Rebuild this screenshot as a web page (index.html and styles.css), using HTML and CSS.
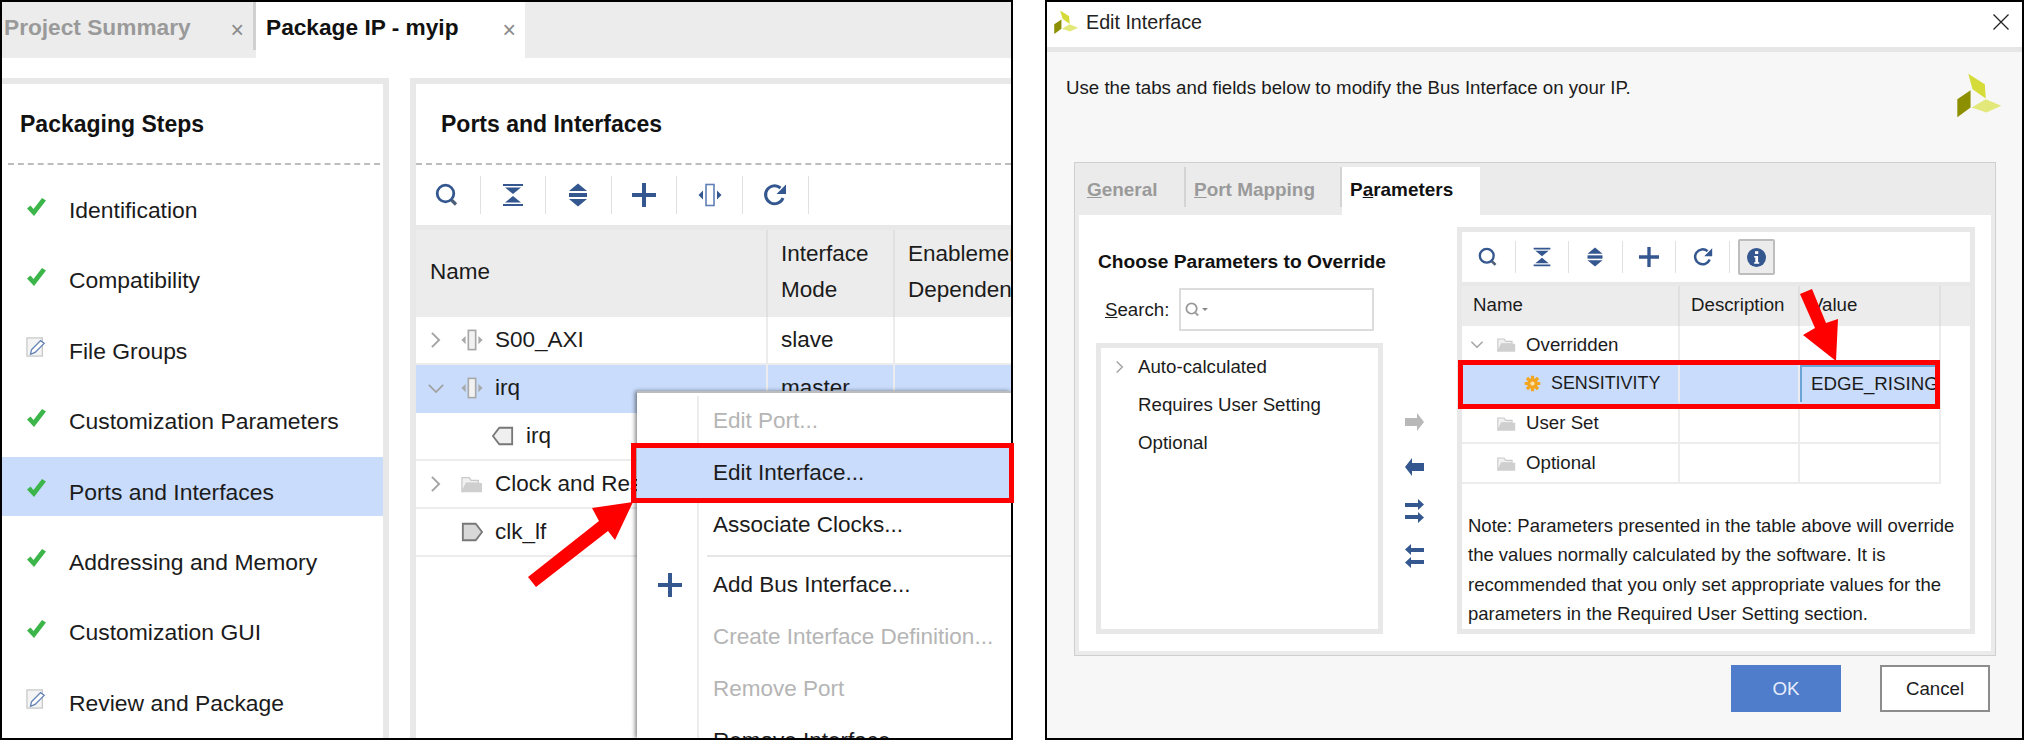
FILE: index.html
```html
<!DOCTYPE html>
<html lang="en">
<head>
    <meta charset="UTF-8">
    <title>Package IP and Edit Interface</title>
    <link rel="stylesheet" href="styles.css">
</head>
<body>

<!-- icon sprite -->
<svg class="sprite" width="0" height="0">
    <symbol id="i-check" viewBox="0 0 20 20"><path d="M1 11.5 L4.5 8.5 L7.5 12 L16 1 L20 3.5 L8 19 Z" fill="#3cb54a"/></symbol>
    <symbol id="i-doc" viewBox="0 0 22 22">
        <rect x="1" y="1" width="17" height="20" fill="#f4f4f4" stroke="#c9c9c9" stroke-width="1.4"/>
        <path d="M5 19 L6 14 L16 4 L20 7 L10 17 Z" fill="#fff" stroke="#5f7fb5" stroke-width="1.4"/>
    </symbol>
    <symbol id="i-search" viewBox="0 0 24 24">
        <circle cx="10.5" cy="10.5" r="8.3" fill="none" stroke="#34578f" stroke-width="2.8"/>
        <path d="M16.5 17 L21 21.5" stroke="#4b5f78" stroke-width="3.2"/>
    </symbol>
    <symbol id="i-collapse" viewBox="0 0 24 24">
        <path d="M2 1 H22 V3 H2 Z M4 4.5 H20 L12 11 Z M4 19.5 H20 L12 13 Z M2 21 H22 V23 H2 Z" fill="#34578f"/>
    </symbol>
    <symbol id="i-expand" viewBox="0 0 24 24">
        <path d="M12 0.5 L21 8 H3 Z M12 23.5 L21 16 H3 Z" fill="#34578f"/>
        <rect x="3" y="10" width="18" height="4" fill="#34578f"/>
    </symbol>
    <symbol id="i-plus" viewBox="0 0 24 24"><path d="M10 0 H14 V10 H24 V14 H14 V24 H10 V14 H0 V10 H10 Z" fill="#34578f"/></symbol>
    <symbol id="i-column" viewBox="0 0 24 24">
        <rect x="8" y="1.5" width="8" height="21" fill="#fff" stroke="#5f7fb5" stroke-width="1.6"/>
        <path d="M0.5 12 L5 7.5 V16.5 Z M23.5 12 L19 7.5 V16.5 Z" fill="#34578f"/>
    </symbol>
    <symbol id="i-refresh" viewBox="0 0 24 24">
        <path d="M20 15 A9 9 0 1 1 17.5 5" fill="none" stroke="#34578f" stroke-width="3"/>
        <path d="M23 1.5 V11 H13.5 Z" fill="#34578f"/>
    </symbol>
    <symbol id="i-iface" viewBox="0 0 24 24">
        <rect x="8" y="1.5" width="8" height="21" fill="#f2f2f2" stroke="#a8a8a8" stroke-width="1.8"/>
        <path d="M0.5 12 L5 7.5 V16.5 Z M23.5 12 L19 7.5 V16.5 Z" fill="#a8a8a8"/>
    </symbol>
    <symbol id="i-folder" viewBox="0 0 24 24">
        <path d="M1 5 H9 L11 8 H19 V11 H6 L1 21 Z" fill="#f1f1f1" stroke="#c9c9c9" stroke-width="1.4"/>
        <path d="M5 11 H23 V21 H1 Z" fill="#cfcfcf"/>
    </symbol>
    <symbol id="i-port-in" viewBox="0 0 24 24"><path d="M1 12 L8 3 H22 V21 H8 Z" fill="#efefef" stroke="#777" stroke-width="2"/></symbol>
    <symbol id="i-port-out" viewBox="0 0 24 24"><path d="M23 12 L16 3 H2 V21 H16 Z" fill="#d8d8d8" stroke="#777" stroke-width="2"/></symbol>
    <symbol id="i-gear" viewBox="0 0 24 24">
        <g stroke="#f3a51f" stroke-width="4.5"><path d="M12 1 V23 M1 12 H23 M4.2 4.2 L19.8 19.8 M19.8 4.2 L4.2 19.8"/></g>
        <circle cx="12" cy="12" r="7.5" fill="#f3a51f"/>
        <circle cx="12" cy="12" r="3" fill="#fbe3ae"/>
    </symbol>
    <symbol id="i-chev-r" viewBox="0 0 12 20"><path d="M2 2 L10 10 L2 18" fill="none" stroke="#a2a2a2" stroke-width="2"/></symbol>
    <symbol id="i-chev-d" viewBox="0 0 20 12"><path d="M2 2 L10 10 L18 2" fill="none" stroke="#a2a2a2" stroke-width="2"/></symbol>
    <symbol id="i-right" viewBox="0 0 26 26"><path d="M6 9 H18 V4 L25 13 L18 22 V17 H6 Z" fill="currentColor"/></symbol>
    <symbol id="i-left" viewBox="0 0 26 26"><path d="M25 9 H13 V4 L6 13 L13 22 V17 H25 Z" fill="currentColor"/></symbol>
    <symbol id="i-both-r" viewBox="0 0 26 26"><path d="M6 5 H19 V1 L25 6.5 L19 12 V9 H6 Z M6 17 H19 V14 L25 19.5 L19 25 V21 H6 Z" fill="#34578f"/></symbol>
    <symbol id="i-both-l" viewBox="0 0 26 26"><path d="M25 5 H12 V1 L6 6.5 L12 12 V9 H25 Z M25 17 H12 V14 L6 19.5 L12 25 V21 H25 Z" fill="#34578f"/></symbol>
    <symbol id="i-logo" viewBox="1295 210 145 145">
        <path d="M1335 218 L1385 250 L1388 293 L1348 265 Z" fill="#d5dc3a"/>
        <path d="M1345 320 L1388 295 L1435 315 L1390 335 Z" fill="#e3e87a"/>
        <path d="M1302 295 L1342 268 V320 L1302 350 Z" fill="#8b8f00"/>
    </symbol>
</svg>

<!-- left screenshot: Package IP -->
<div class="shot shot-left">
    <div class="doc-tabs">
        <div class="doc-tab">Project Summary <span class="x">×</span></div>
        <div class="doc-tab active">Package IP - myip <span class="x">×</span></div>
    </div>

    <div class="panels">
        <div class="steps">
            <h3 class="panel-title">Packaging Steps</h3>
            <ul class="step-list">
                <li><svg class="step-ico"><use href="#i-check"/></svg>Identification</li>
                <li><svg class="step-ico"><use href="#i-check"/></svg>Compatibility</li>
                <li><svg class="step-ico"><use href="#i-doc"/></svg>File Groups</li>
                <li><svg class="step-ico"><use href="#i-check"/></svg>Customization Parameters</li>
                <li class="selected"><svg class="step-ico"><use href="#i-check"/></svg>Ports and Interfaces</li>
                <li><svg class="step-ico"><use href="#i-check"/></svg>Addressing and Memory</li>
                <li><svg class="step-ico"><use href="#i-check"/></svg>Customization GUI</li>
                <li><svg class="step-ico"><use href="#i-doc"/></svg>Review and Package</li>
            </ul>
        </div>

        <div class="ports">
            <h3 class="panel-title">Ports and Interfaces</h3>
            <div class="toolbar big">
                <span class="tool"><svg><use href="#i-search"/></svg></span>
                <span class="tool"><svg><use href="#i-collapse"/></svg></span>
                <span class="tool"><svg><use href="#i-expand"/></svg></span>
                <span class="tool"><svg><use href="#i-plus"/></svg></span>
                <span class="tool"><svg><use href="#i-column"/></svg></span>
                <span class="tool"><svg><use href="#i-refresh"/></svg></span>
            </div>
            <table class="grid ports-grid">
                <thead>
                    <tr>
                        <th>Name</th>
                        <th>Interface<br>Mode</th>
                        <th>Enablement<br>Dependency</th>
                    </tr>
                </thead>
                <tbody>
                    <tr>
                        <td><div class="node"><span class="caret"><svg class="chev-r"><use href="#i-chev-r"/></svg></span><svg class="node-ico"><use href="#i-iface"/></svg>S00_AXI</div></td>
                        <td>slave</td><td></td>
                    </tr>
                    <tr class="selected">
                        <td><div class="node"><span class="caret"><svg class="chev-d"><use href="#i-chev-d"/></svg></span><svg class="node-ico"><use href="#i-iface"/></svg>irq</div></td>
                        <td>master</td><td></td>
                    </tr>
                    <tr>
                        <td><div class="node child"><svg class="node-ico"><use href="#i-port-in"/></svg>irq</div></td>
                        <td></td><td></td>
                    </tr>
                    <tr>
                        <td><div class="node"><span class="caret"><svg class="chev-r"><use href="#i-chev-r"/></svg></span><svg class="node-ico"><use href="#i-folder"/></svg>Clock and Reset</div></td>
                        <td></td><td></td>
                    </tr>
                    <tr>
                        <td><div class="node"><span class="caret"></span><svg class="node-ico"><use href="#i-port-out"/></svg>clk_lf</div></td>
                        <td></td><td></td>
                    </tr>
                </tbody>
            </table>
        </div>
    </div>

    <!-- context menu -->
    <div class="menu">
        <div class="menu-item off"><span class="gutter"></span>Edit Port...</div>
        <div class="menu-item hover"><span class="gutter"></span>Edit Interface...</div>
        <div class="menu-item"><span class="gutter"></span>Associate Clocks...</div>
        <div class="menu-sep"></div>
        <div class="menu-item"><span class="gutter"><svg class="menu-plus"><use href="#i-plus"/></svg></span>Add Bus Interface...</div>
        <div class="menu-item off"><span class="gutter"></span>Create Interface Definition...</div>
        <div class="menu-item off"><span class="gutter"></span>Remove Port</div>
        <div class="menu-item"><span class="gutter"></span>Remove Interface</div>
    </div>

    <!-- annotations -->
    <div class="mark mark-edit"></div>
    <svg class="arrow arrow-edit" width="110" height="90" viewBox="526 500 110 90">
        <path d="M528 577 L536 587 L608 531 L615 540 L633 502 L592 508 L599 521 Z" fill="#ff0000"/>
    </svg>
</div>

<!-- right screenshot: Edit Interface dialog -->
<div class="shot shot-right">
    <div class="titlebar">
        <svg class="title-logo"><use href="#i-logo"/></svg>
        <span class="title-text">Edit Interface</span>
        <svg class="title-close" viewBox="0 0 16 16"><path d="M0.5 0.5 L15.5 15.5 M15.5 0.5 L0.5 15.5" stroke="#222" stroke-width="1.3"/></svg>
    </div>

    <div class="dialog">
        <div class="intro">
            <span>Use the tabs and fields below to modify the Bus Interface on your IP.</span>
            <svg class="intro-logo"><use href="#i-logo"/></svg>
        </div>

        <div class="pane">
            <div class="pane-tabs">
                <div class="pane-tab first"><u>G</u>eneral</div>
                <div class="pane-tab second"><u>P</u>ort Mapping</div>
                <div class="pane-tab active">P<u>a</u>rameters</div>
            </div>
            <div class="pane-body">
                <div class="chooser">
                    <h4 class="chooser-title">Choose Parameters to Override</h4>
                    <div class="search-row">
                        <label class="search-label"><u>S</u>earch:</label>
                        <div class="search-box">
                            <svg class="search-ico"><use href="#i-search"/></svg>
                            <span class="search-drop"></span>
                        </div>
                    </div>
                    <div class="cat-list">
                        <div class="cat"><span class="cat-caret"><svg class="chev-r small"><use href="#i-chev-r"/></svg></span>Auto-calculated</div>
                        <div class="cat"><span class="cat-caret"></span>Requires User Setting</div>
                        <div class="cat"><span class="cat-caret"></span>Optional</div>
                    </div>
                </div>

                <div class="movers">
                    <svg class="mover off"><use href="#i-right"/></svg>
                    <svg class="mover"><use href="#i-left"/></svg>
                    <svg class="mover"><use href="#i-both-r"/></svg>
                    <svg class="mover"><use href="#i-both-l"/></svg>
                </div>

                <div class="params">
                    <div class="toolbar small">
                        <span class="tool"><svg><use href="#i-search"/></svg></span>
                        <span class="tool"><svg><use href="#i-collapse"/></svg></span>
                        <span class="tool"><svg><use href="#i-expand"/></svg></span>
                        <span class="tool"><svg><use href="#i-plus"/></svg></span>
                        <span class="tool"><svg><use href="#i-refresh"/></svg></span>
                        <span class="info-btn">
                            <svg viewBox="0 0 24 24">
                                <circle cx="12" cy="12" r="12" fill="#34578f"/>
                                <rect x="10.2" y="4" width="4" height="3.6" fill="#fff"/>
                                <path d="M9 10 H14 V18 H15.5 V20 H9 V18 H10.5 V12 H9 Z" fill="#fff"/>
                            </svg>
                        </span>
                    </div>
                    <table class="grid params-grid">
                        <thead>
                            <tr><th>Name</th><th>Description</th><th>Value</th><th class="tail"></th></tr>
                        </thead>
                        <tbody>
                            <tr class="tight">
                                <td><div class="pnode"><svg class="chev-d small"><use href="#i-chev-d"/></svg><svg class="pnode-ico"><use href="#i-folder"/></svg>Overridden</div></td>
                                <td></td><td></td><td class="tail"></td>
                            </tr>
                            <tr class="tight selected">
                                <td><div class="pnode leaf"><svg class="gear"><use href="#i-gear"/></svg><span class="param-name">SENSITIVITY</span></div></td>
                                <td></td><td class="editing"><div class="edit-val">EDGE_RISING</div></td><td class="tail"></td>
                            </tr>
                            <tr>
                                <td><div class="pnode"><span class="pnode-gap"></span><svg class="pnode-ico"><use href="#i-folder"/></svg>User Set</div></td>
                                <td></td><td></td><td class="tail"></td>
                            </tr>
                            <tr>
                                <td><div class="pnode"><span class="pnode-gap"></span><svg class="pnode-ico"><use href="#i-folder"/></svg>Optional</div></td>
                                <td></td><td></td><td class="tail"></td>
                            </tr>
                        </tbody>
                    </table>
                    <p class="note">Note: Parameters presented in the table above will override the values normally calculated by the software. It is recommended that you only set appropriate values for the parameters in the Required User Setting section.</p>
                </div>
            </div>
        </div>

        <div class="actions">
            <button class="btn primary">OK</button>
            <button class="btn">Cancel</button>
        </div>
    </div>

    <!-- annotations -->
    <div class="mark mark-param"></div>
    <svg class="arrow arrow-param" width="44" height="76" viewBox="1797 287 44 76">
        <path d="M1800 294 L1812 289 L1826 323 L1838 319 L1836 361 L1803 335 L1815 328 Z" fill="#ff0000"/>
    </svg>
</div>

</body>
</html>
```

FILE: styles.css
```css
* {
    box-sizing: border-box;
}

body {
    margin: 0;
    width: 2024px;
    height: 740px;
    display: flex;
    gap: 32px;
    background: #fff;
    color: #1b1b1b;
    font-family: "Liberation Sans", Arial, sans-serif;
    overflow: hidden;
}

.sprite {
    position: absolute;
}

.shot {
    position: relative;
    height: 740px;
    border: 2px solid #000;
    display: flex;
    flex-direction: column;
}

.shot-left {
    width: 1013px;
    font-size: 22.9px;
}

.shot-right {
    flex: 1;
    font-size: 18.7px;
}

/* Red annotations */
.mark {
    position: absolute;
    border: 5px solid #f00;
}

.mark-edit {
    left: 629px;
    top: 441px;
    width: 383px;
    height: 60px;
}

.mark-param {
    left: 411px;
    top: 358px;
    width: 482px;
    height: 49px;
}

.arrow {
    position: absolute;
}

.arrow-edit {
    left: 524px;
    top: 498px;
}

.arrow-param {
    left: 750px;
    top: 285px;
}

/* Document tabs */
.doc-tabs {
    display: flex;
    align-items: flex-start;
    height: 56px;
    flex: none;
    background: #ececec;
    font-size: 22.7px;
    font-weight: bold;
}

.doc-tab {
    position: relative;
    width: 254px;
    height: 48px;
    padding: 2px 0 0 2px;
    line-height: 46px;
    color: #9a9a9a;
    border-right: 3px solid #d0d0d0;
}

.doc-tab.active {
    width: 269px;
    height: 56px;
    padding-left: 10px;
    background: #fff;
    color: #111;
    border-right: none;
}

.x {
    position: absolute;
    right: 9px;
    top: 4px;
    line-height: 48px;
    font-size: 23px;
    font-weight: normal;
    color: #8a8a8a;
}

/* Panels */
.panels {
    flex: 1;
    min-height: 0;
    display: flex;
    margin-top: 20px;
    gap: 21px;
}

.steps {
    width: 387px;
    border-top: 6px solid #e8e8e8;
    border-right: 6px solid #e8e8e8;
}

.ports {
    flex: 1;
    min-width: 0;
    border-top: 6px solid #e8e8e8;
    border-left: 6px solid #e8e8e8;
    overflow: hidden;
}

.panel-title {
    margin: 0 3px 0 6px;
    height: 81px;
    padding: 28px 0 0 12px;
    font-size: 23px;
    line-height: 24px;
    color: #111;
    border-bottom: 2px dashed #bdbdbd;
}

.ports .panel-title {
    margin: 0;
    padding-left: 25px;
}

.step-list {
    list-style: none;
    margin: 0;
    padding: 10px 0 0;
}

.step-list li {
    display: flex;
    align-items: center;
    height: 59px;
    margin-bottom: 11.4px;
    padding: 12px 0 0 24px;
}

.step-list li.selected {
    background: #c9dcfb;
}

.step-ico {
    width: 20px;
    height: 20px;
    margin: -8px 23px 0 0;
    flex: none;
}

/* Toolbars */
.toolbar {
    display: flex;
    align-items: center;
    background: #fff;
}

.toolbar.big {
    height: 60px;
    margin-left: -1px;
}

.toolbar.small {
    height: 50px;
}

.tool {
    display: flex;
    align-items: center;
    justify-content: center;
    border-right: 1.5px solid #e0e0e0;
}

.big .tool {
    width: 65.6px;
    height: 38px;
}

.big .tool svg {
    width: 24px;
    height: 24px;
}

.small .tool {
    width: 53.6px;
    height: 32px;
}

.small .tool svg {
    width: 20px;
    height: 20px;
}

.info-btn {
    display: flex;
    align-items: center;
    justify-content: center;
    width: 37px;
    height: 36px;
    margin-left: 8px;
    background: #ececec;
    border: 2px solid #bdbdbd;
    border-radius: 2px;
}

.info-btn svg {
    width: 19px;
    height: 19px;
}

/* Tables */
.grid {
    border-collapse: separate;
    border-spacing: 0;
    table-layout: fixed;
    border-top-style: solid;
    border-top-color: #e8e8e8;
}

.grid th {
    background: #ececec;
    font-weight: normal;
    text-align: left;
    border-right: 2px solid #e0e0e0;
}

.grid td {
    border-right: 2px solid #ececec;
    border-bottom: 2px solid #ececec;
    padding: 0;
}

.grid tr.selected td {
    background: #c9dcfb;
    border-bottom-color: #c9dcfb;
}

.ports-grid {
    width: 700px;
    border-top-width: 5px;
    font-size: 22.5px;
}

.ports-grid th {
    height: 87px;
    padding: 0 0 4px 13px;
    line-height: 36px;
}

.ports-grid th:first-child {
    width: 352px;
    padding-left: 14px;
}

.ports-grid th:nth-child(2) {
    width: 127px;
}

.ports-grid td {
    height: 48px;
}

.ports-grid td + td {
    padding-left: 13px;
}

.node {
    display: flex;
    align-items: center;
    padding-left: 14px;
}

.node.child {
    padding-left: 72px;
}

.caret {
    width: 27px;
    display: flex;
    flex: none;
}

.chev-r {
    width: 11px;
    height: 18px;
}

.chev-d {
    width: 18px;
    height: 11px;
    margin-left: -3px;
}

.node-ico {
    width: 22px;
    height: 22px;
    margin: 0 12px 0 4px;
    flex: none;
}

/* Context menu */
.menu {
    position: absolute;
    left: 635px;
    top: 389px;
    right: 0;
    bottom: 0;
    padding-top: 2px;
    font-size: 22.5px;
    background: #fff;
    border-top: 2px solid #bcbcbc;
    box-shadow: -2px 0 4px rgba(0, 0, 0, 0.45);
    overflow: hidden;
}

.menu::before {
    content: "";
    position: absolute;
    left: 60px;
    top: 3px;
    bottom: 0;
    width: 2px;
    background: #ececec;
}

.menu-item {
    position: relative;
    display: flex;
    align-items: center;
    height: 52px;
}

.menu-item.off {
    color: #b5b5b5;
}

.menu-item.hover {
    background: #c9dcfb;
}

.gutter {
    width: 76px;
    flex: none;
    display: flex;
    padding-left: 21px;
}

.menu-plus {
    width: 24px;
    height: 24px;
}

.menu-sep {
    height: 8px;
    padding-top: 4px;
    margin-left: 70px;
}

.menu-sep::after {
    content: "";
    display: block;
    height: 2px;
    background: #e6e6e6;
}

/* Dialog */
.titlebar {
    position: relative;
    height: 50px;
    flex: none;
    display: flex;
    align-items: center;
    padding: 0 12px 5px 6px;
    background: #fff;
    border-bottom: 5px solid #e6e6e6;
}

.title-logo {
    width: 26px;
    height: 26px;
    margin-right: 7px;
}

.title-text {
    flex: 1;
    font-size: 19.7px;
    color: #222;
}

.title-close {
    width: 16px;
    height: 16px;
    margin-right: 1px;
}

.dialog {
    flex: 1;
    min-height: 0;
    display: flex;
    flex-direction: column;
    background: #f7f7f7;
}

.intro {
    height: 110px;
    flex: none;
    display: flex;
    justify-content: space-between;
    padding: 25px 19px 0;
    line-height: 22px;
}

.intro-logo {
    width: 48px;
    height: 48px;
    margin-top: -6px;
}

.pane {
    height: 494px;
    flex: none;
    margin: 0 26px 0 27px;
    padding: 4px;
    background: #ebebeb;
    border: 1px solid #cfcfcf;
    display: flex;
    flex-direction: column;
}

.pane-tabs {
    height: 48px;
    flex: none;
    display: flex;
    font-size: 18.95px;
    font-weight: bold;
    color: #9a9a9a;
}

.pane-tab {
    height: 40px;
    line-height: 46px;
    padding-left: 8px;
    border-right: 2px solid #d4d4d4;
}

.pane-tab.first {
    width: 107px;
}

.pane-tab.second {
    width: 156px;
}

.pane-tab.active {
    width: 138px;
    height: 48px;
    background: #fff;
    color: #111;
    border-right: none;
}

.pane-body {
    flex: 1;
    min-height: 0;
    display: flex;
    padding: 12px 16px 17px 17px;
    background: #fff;
}

.chooser {
    width: 287px;
    flex: none;
    display: flex;
    flex-direction: column;
}

.chooser-title {
    margin: 24px 0 15px 2px;
    font-size: 19.2px;
    line-height: 22px;
    white-space: nowrap;
    color: #111;
}

.search-row {
    display: flex;
    align-items: center;
    height: 43px;
    margin: 0 9px 12px 9px;
}

.search-label {
    width: 74px;
    flex: none;
}

.search-box {
    width: 195px;
    height: 43px;
    display: flex;
    align-items: center;
    padding-left: 4px;
    background: #fff;
    border: 2px solid #dcdcdc;
}

.search-ico {
    width: 15px;
    height: 15px;
    filter: grayscale(1) opacity(0.6);
}

.search-drop {
    margin-left: 2px;
    border: 3px solid transparent;
    border-top: 3px solid #888;
    border-bottom: none;
}

.cat-list {
    flex: 1;
    border: 5px solid #e8e8e8;
}

.cat {
    display: flex;
    align-items: center;
    height: 38px;
    padding-left: 14px;
}

.cat-caret {
    width: 23px;
    display: flex;
    flex: none;
}

.chev-r.small {
    width: 9px;
    height: 14px;
}

.chev-d.small {
    width: 14px;
    height: 9px;
    margin-left: 0;
}

.movers {
    width: 74px;
    flex: none;
    display: flex;
    flex-direction: column;
    gap: 18.6px;
    padding: 182px 0 0 16px;
    color: #34578f;
}

.mover {
    width: 26px;
    height: 26px;
}

.mover.off {
    color: #b8b8b8;
}

.params {
    flex: 1;
    min-width: 0;
    border: 5px solid #e8e8e8;
    overflow: hidden;
}

.params-grid {
    width: 508px;
    border-top-width: 4px;
}

.params-grid th {
    height: 40px;
    padding: 0 0 2px 11px;
}

.params-grid th:first-child {
    width: 218px;
}

.params-grid th:nth-child(2) {
    width: 120px;
}

.params-grid th:nth-child(3) {
    width: 141px;
}

.params-grid th.tail {
    border-right: none;
}

.params-grid td {
    height: 40px;
}

.params-grid tr.tight td {
    height: 39px;
}

.grid td.tail,
.grid tr.selected td.tail {
    background: #fff;
    border: none;
}

.pnode {
    display: flex;
    align-items: center;
    padding-left: 8px;
}

.pnode.leaf {
    padding-left: 62px;
}

.pnode-gap {
    width: 14px;
    flex: none;
}

.pnode-ico {
    width: 19px;
    height: 19px;
    margin: 0 10px 0 13px;
    flex: none;
}

.gear {
    width: 17px;
    height: 17px;
    margin-right: 10px;
    flex: none;
}

.param-name {
    font-size: 17.9px;
}

.grid td.editing {
    box-shadow: inset 2px 2px 0 #6aa5d8;
}

.edit-val {
    width: 136px;
    padding-left: 11px;
    white-space: nowrap;
    overflow: hidden;
}

.note {
    margin: 27px 7px 0 6px;
    font-size: 18.5px;
    line-height: 29.4px;
}

.actions {
    display: flex;
    justify-content: flex-end;
    gap: 39px;
    padding: 9px 32px 0 0;
}

.btn {
    width: 110px;
    height: 47px;
    font-family: inherit;
    font-size: 18.7px;
    color: #1b1b1b;
    background: #fff;
    border: 2px solid #8c8c8c;
    border-radius: 0;
}

.btn.primary {
    background: #507ccc;
    border: none;
    color: #e6edfa;
}
```
